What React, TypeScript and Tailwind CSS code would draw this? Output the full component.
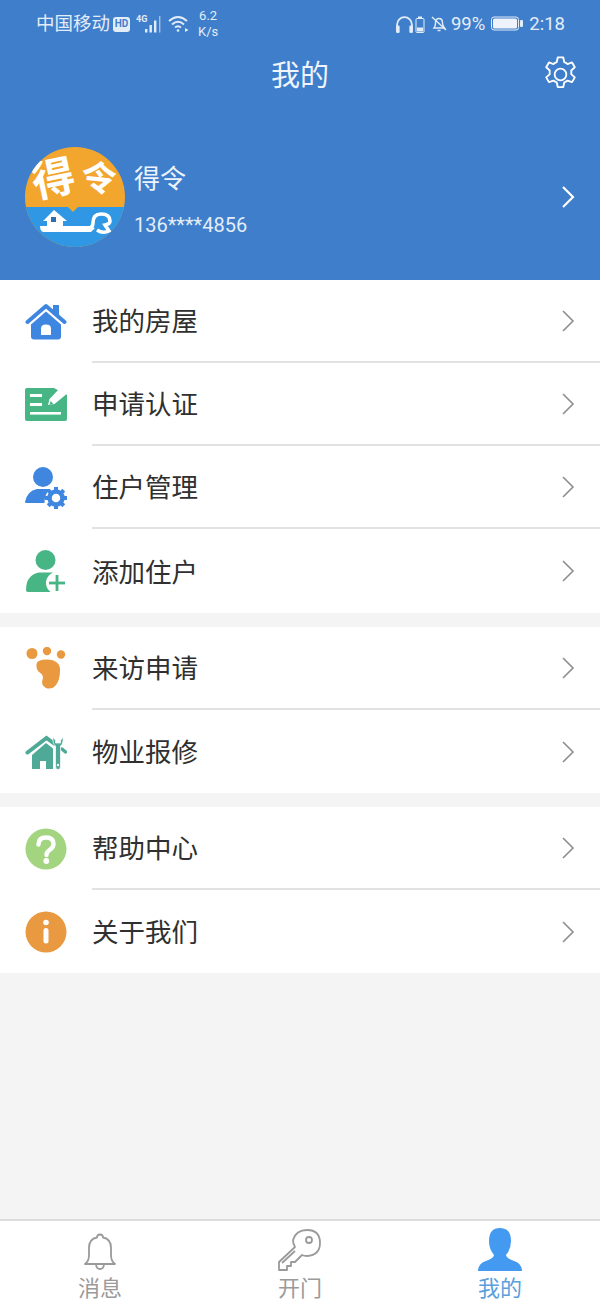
import type { ReactNode } from "react";

const FONT = "font-['Roboto','Noto_Sans_CJK_SC',sans-serif]";

function HomeIcon() {
  return (
    <svg width="42" height="38" viewBox="0 0 42 38">
      <rect x="28" y="2" width="6" height="10" fill="#3f86e0" />
      <path d="M6 21.5 L21 8.5 L36 21.5 V33.5 Q36 36.5 33 36.5 H9 Q6 36.5 6 33.5 Z" fill="#3f86e0" />
      <path d="M2.5 19 L21 3 L39.5 19" fill="none" stroke="#3f86e0" strokeWidth="4" strokeLinecap="round" strokeLinejoin="round" />
      <path d="M16 32 V25.5 Q16 21.5 21 21.5 Q26 21.5 26 25.5 V32 Z" fill="#fff" />
    </svg>
  );
}

function CertIcon() {
  return (
    <svg width="42" height="34" viewBox="0 0 42 34">
      <path d="M2 0 H29 L42 7 V31 Q42 33 40 33 H2 Q0 33 0 31 V2 Q0 0 2 0 Z" fill="#47b584" />
      <rect x="5" y="6" width="12" height="3" fill="#fff" />
      <rect x="5" y="15" width="12" height="3" fill="#fff" />
      <rect x="5" y="24" width="31" height="2.6" fill="#fff" />
      <path d="M23 17 L24.5 11 L34 1 L38.5 0 L41.5 4 L40.5 7 L29.5 16 Z" fill="#fff" />
      <path d="M24.5 17 L25.6 13 L28.2 15.8 Z" fill="#47b584" />
    </svg>
  );
}

function UserGearIcon() {
  const teeth = [0, 45, 90, 135, 180, 225, 270, 315];
  return (
    <svg width="44" height="44" viewBox="0 0 44 44">
      <circle cx="19" cy="11" r="10" fill="#3f86e0" />
      <path d="M1 36 Q3 25 13 23 H26 Q20.5 28 20.5 37 H2 Q1 37 1 36 Z" fill="#3f86e0" />
      <circle cx="32" cy="32" r="6.5" fill="none" stroke="#3f86e0" strokeWidth="4.5" />
      {teeth.map((a) => (
        <rect key={a} x="30" y="21" width="4" height="4" fill="#3f86e0" transform={`rotate(${a} 32 32)`} />
      ))}
    </svg>
  );
}

function UserAddIcon() {
  return (
    <svg width="44" height="44" viewBox="0 0 44 44">
      <circle cx="21.5" cy="11" r="10" fill="#47b584" />
      <path d="M2 41 Q2 26 15 23.5 H28 Q32 24 34 26 V43 H4 Q2 43 2 41 Z" fill="#47b584" />
      <circle cx="33" cy="34" r="11" fill="#fff" />
      <rect x="31.6" y="26" width="2.8" height="16" fill="#47b584" />
      <rect x="25" y="32.6" width="16" height="2.8" fill="#47b584" />
    </svg>
  );
}

function FootIcon() {
  return (
    <svg width="42" height="44" viewBox="0 0 42 44">
      <circle cx="7" cy="6.5" r="5.5" fill="#e9993f" />
      <circle cx="22" cy="4" r="4.2" fill="#e9993f" />
      <circle cx="36" cy="7.5" r="4.2" fill="#e9993f" />
      <path d="M11.5 17 Q12 12.5 22 12.5 Q35 13 35 23 Q35 33 31 38 Q27 43 21 41 Q15 38 18 31 Q18 27 14 25 Q11 22 11.5 17 Z" fill="#e9993f" />
    </svg>
  );
}

function RepairIcon() {
  return (
    <svg width="42" height="36" viewBox="0 0 42 36">
      <path d="M7 21 L21 9 L28 14.5 V35 H21 V27 H15 V35 H7 Z" fill="#4fa997" />
      <path d="M2.5 18.5 L21.5 4 L29 9.5" fill="none" stroke="#4fa997" strokeWidth="4" strokeLinecap="round" />
      <path d="M37 15 L40.5 18" fill="none" stroke="#4fa997" strokeWidth="3.4" strokeLinecap="round" />
      <path d="M28 3 Q27.5 10 30.5 12 V31 Q30.5 35.5 33 35.5 Q35.5 35.5 35.5 31 V12 Q38.5 10 38 3 L35.5 6.5 V9 H30.5 V6.5 Z" fill="#4fa997" stroke="#fff" strokeWidth="0.7" />
      <circle cx="33" cy="31" r="1.2" fill="#fff" />
    </svg>
  );
}

function HelpIcon() {
  return (
    <svg width="42" height="42" viewBox="0 0 42 42">
      <circle cx="21" cy="21" r="20.5" fill="#a3d480" />
      <path d="M13.5 16.5 Q13.5 9.5 21 9.5 Q28.5 9.5 28.5 16 Q28.5 19.5 24.5 22 Q21.5 24 21.5 27" fill="none" stroke="#fff" strokeWidth="4.4" strokeLinecap="round" />
      <circle cx="21.3" cy="33" r="2.9" fill="#fff" />
    </svg>
  );
}

function InfoIcon() {
  return (
    <svg width="42" height="42" viewBox="0 0 42 42">
      <circle cx="21" cy="21" r="20.5" fill="#e9993f" />
      <circle cx="21" cy="11.5" r="2.8" fill="#fff" />
      <rect x="18.5" y="17" width="5" height="15.5" rx="2.5" fill="#fff" />
    </svg>
  );
}

function Chevron({ color = "#8e8e8e", width = 1.6 }: { color?: string; width?: number }) {
  return (
    <svg width="14" height="24" viewBox="0 0 14 24">
      <path d="M2 2 L12 12 L2 22" fill="none" stroke={color} strokeWidth={width} />
    </svg>
  );
}

function GearIcon() {
  return (
    <svg width="39" height="39" viewBox="0 0 24 24" fill="none" stroke="#fff" strokeWidth="1.15" strokeLinejoin="round">
      <path d="M10.3 1.5 h3.4 l.6 2.9 a7.8 7.8 0 0 1 2 1.15 l2.8-.95 1.7 2.95-2.2 1.95 a7.8 7.8 0 0 1 0 2.3 l2.2 1.95-1.7 2.95-2.8-.95 a7.8 7.8 0 0 1-2 1.15 l-.6 2.9 h-3.4 l-.6-2.9 a7.8 7.8 0 0 1-2-1.15 l-2.8.95-1.7-2.95 2.2-1.95 a7.8 7.8 0 0 1 0-2.3 l-2.2-1.95 1.7-2.95 2.8.95 a7.8 7.8 0 0 1 2-1.15 Z" />
      <circle cx="12" cy="12" r="3.6" />
    </svg>
  );
}

function StatusLeft() {
  return (
    <div className="flex items-center">
      <span className="text-[18.5px] leading-[24px] text-[#e3edf8]">中国移动</span>
      <span className="ml-[3px] flex h-[15px] w-[17px] items-center justify-center rounded-[3px] bg-[#e3edf8] text-[10px] font-bold leading-none text-[#3f7ecb]">HD</span>
      <svg className="ml-[6px]" width="27" height="20" viewBox="0 0 27 20" fill="#e3edf8">
        <rect x="9" y="15" width="2.4" height="3.5" />
        <rect x="13.5" y="11" width="2.4" height="7.5" />
        <rect x="18" y="6.5" width="2.4" height="12" />
        <rect x="23" y="2" width="1.4" height="16.5" opacity="0.6" />
        <text x="0" y="8" fontSize="9" fontWeight="700">4G</text>
      </svg>
      <svg className="ml-[5px]" width="22" height="18" viewBox="0 0 22 18" fill="none" stroke="#e3edf8" strokeWidth="1.9">
        <path d="M1 6 Q10 -2 19 6" />
        <path d="M4 9.5 Q10 4 16 9.5" />
        <path d="M7 12.5 Q10 10 13 12.5" />
        <circle cx="10" cy="15.5" r="1.3" fill="#e3edf8" stroke="none" />
        <path d="M17 13 L20.5 15 L17 17 Z" fill="#e3edf8" stroke="none" />
      </svg>
      <div className="ml-[8px] flex flex-col items-center text-[13px] leading-[16px] text-[#e3edf8]">
        <span>6.2</span>
        <span>K/s</span>
      </div>
    </div>
  );
}

function StatusRight() {
  return (
    <div className="flex items-center text-[#e3edf8]">
      <svg width="19" height="19" viewBox="0 0 18 18" fill="none" stroke="#e3edf8" strokeWidth="1.7">
        <path d="M2 14 V9 A7 7 0 0 1 16 9 V14" />
        <rect x="1" y="10" width="3.4" height="7" rx="1.2" fill="#e3edf8" stroke="none" />
        <rect x="13.6" y="10" width="3.4" height="7" rx="1.2" fill="#e3edf8" stroke="none" />
      </svg>
      <svg className="ml-[1px]" width="10" height="19" viewBox="0 0 10 18" fill="none" stroke="#e3edf8" strokeWidth="1">
        <rect x="1" y="3" width="8" height="14" rx="1" />
        <rect x="3" y="1" width="4" height="2" fill="#e3edf8" stroke="none" />
        <rect x="2" y="12" width="6" height="4" fill="#e3edf8" stroke="none" />
      </svg>
      <svg className="ml-[6px]" width="16" height="18" viewBox="0 0 16 18" fill="none" stroke="#e3edf8" strokeWidth="1.4">
        <path d="M3 13 Q4.5 11 4.5 8 Q4.5 3.5 8 3.5 Q11.5 3.5 11.5 8 Q11.5 11 13.5 13 Z" />
        <path d="M1 2 L15 15" />
        <path d="M6.5 15.5 H9.5" />
      </svg>
      <span className="ml-[4px] text-[18.5px] leading-[24px]">99%</span>
      <svg className="ml-[6px]" width="33" height="16" viewBox="0 0 33 16">
        <rect x="0.5" y="1" width="27" height="13" rx="2.5" fill="none" stroke="#e3edf8" strokeWidth="1" />
        <rect x="2" y="2.5" width="24" height="10" rx="1.5" fill="#eef3fb" />
        <rect x="29" y="4" width="3" height="7" rx="1" fill="#e3edf8" />
      </svg>
      <span className="ml-[5px] text-[18.5px] leading-[24px]">2:18</span>
    </div>
  );
}

function Avatar() {
  return (
    <div className="relative h-[100px] w-[100px] shrink-0 overflow-hidden rounded-full bg-[#f2a62e]">
      <div className="absolute inset-x-0 bottom-0 h-[40px] bg-[#2f97e3]" />
      <span className="absolute left-[7px] top-[11px] -rotate-[12deg] text-[43px] font-bold leading-none text-white">得</span>
      <span className="absolute left-[56px] top-[15px] rotate-[6deg] text-[35px] font-bold leading-none text-white">令</span>
      <svg className="absolute bottom-0 left-0" width="100" height="44" viewBox="0 0 100 44">
        <path d="M43 4 H53 L48 9 Z" fill="#f2a62e" />
        <path d="M18 18 L29 7 L42 18 H38 V25 H22 V18 Z" fill="#fff" />
        <rect x="26" y="14" width="5" height="5" fill="#2f6fb0" />
        <path d="M15 23 H64 L70 25 L66 29 H18 Q15 28 15 23 Z" fill="#fff" />
        <path d="M62 26 Q68 25 68 20 Q68 11 76 11 Q85 11 85 18 Q85 21 80 22 L84 28 Q78 31 72 27" fill="none" stroke="#fff" strokeWidth="3.6" />
      </svg>
    </div>
  );
}

function Row({ icon, label, last, height }: { icon: ReactNode; label: string; last?: boolean; height: string }) {
  return (
    <div className={`flex items-center bg-white ${height}`}>
      <div className="flex w-[92px] shrink-0 justify-center">{icon}</div>
      <div className={`flex h-full flex-1 items-center justify-between pr-[25px] ${last ? "" : "border-b-2 border-[#e2e2e2]"}`}>
        <span className="pt-[3px] text-[26.5px] leading-[34px] text-[#303030]">{label}</span>
        <Chevron />
      </div>
    </div>
  );
}

function Tab({ icon, label, active }: { icon: ReactNode; label: string; active?: boolean }) {
  return (
    <div className="flex w-[200px] flex-col items-center">
      <div className="flex h-[45px] items-end">{icon}</div>
      <span className={`mt-[7px] text-[22px] leading-[22px] ${active ? "text-[#5a9fdc]" : "text-[#9a9a9a]"}`}>{label}</span>
    </div>
  );
}

export default function App() {
  return (
    <div className={`flex h-[1300px] w-[600px] flex-col overflow-hidden bg-[#f4f4f4] ${FONT}`}>
      <header className="h-[280px] shrink-0 bg-[#3f7ecb]">
        <div className="flex h-[46px] items-center justify-between pl-[36px] pr-[35px] pt-[2px]">
          <StatusLeft />
          <StatusRight />
        </div>
        <div className="relative flex h-[58px] items-center justify-center">
          <span className="pt-[1px] text-[29px] leading-[36px] text-[#f0f5fb]">我的</span>
          <div className="absolute right-[20px] top-[9px]">
            <GearIcon />
          </div>
        </div>
        <div className="mt-[43px] flex items-center pl-[25px] pr-[25px]">
          <Avatar />
          <div className="ml-[9px] flex flex-1 flex-col pt-[5px]">
            <span className="text-[26px] leading-[34px] text-[#edf3fa]">得令</span>
            <span className="mt-[16px] text-[20px] leading-[26px] text-[#e3edf8]">136****4856</span>
          </div>
          <Chevron color="#ffffff" width={2.2} />
        </div>
      </header>

      <div className="flex flex-col">
        <Row height="h-[83px]" icon={<HomeIcon />} label="我的房屋" />
        <Row height="h-[83px]" icon={<CertIcon />} label="申请认证" />
        <Row height="h-[83px]" icon={<UserGearIcon />} label="住户管理" />
        <Row height="h-[84px]" icon={<UserAddIcon />} label="添加住户" last />
      </div>
      <div className="mt-[14px] flex flex-col">
        <Row height="h-[83px]" icon={<FootIcon />} label="来访申请" />
        <Row height="h-[83px]" icon={<RepairIcon />} label="物业报修" last />
      </div>
      <div className="mt-[14px] flex flex-col">
        <Row height="h-[83px]" icon={<HelpIcon />} label="帮助中心" />
        <Row height="h-[83px]" icon={<InfoIcon />} label="关于我们" last />
      </div>

      <div className="flex-1" />

      <nav className="flex h-[81px] shrink-0 border-t-2 border-[#dcdcdc] bg-white pt-[5px]">
        <Tab
          label="消息"
          icon={
            <svg width="34" height="38" viewBox="0 0 34 38" fill="none" stroke="#9a9a9a" strokeWidth="1.8">
              <path d="M2 31 Q6 28 6 22 V15 Q6 6 14 4.5 Q14 1.5 17 1.5 Q20 1.5 20 4.5 Q28 6 28 15 V22 Q28 28 32 31 Z" strokeLinejoin="round" />
              <path d="M13 31.5 Q13.5 36 17 36 Q20.5 36 21 31.5" />
            </svg>
          }
        />
        <Tab
          label="开门"
          icon={
            <svg width="44" height="42" viewBox="0 0 44 42" fill="none" stroke="#9a9a9a" strokeWidth="1.8" strokeLinejoin="round">
              <path d="M15 11 Q18 1 29 1 Q42 1 42 14 Q42 26 29 27 Q26 27 24 26 L17 33 H13 V37 H9 V41 H1 V33 L17 18 Q15 15 15 11 Z" />
              <circle cx="31" cy="11" r="3" />
              <path d="M4 34 L17 22" />
            </svg>
          }
        />
        <Tab
          active
          label="我的"
          icon={
            <svg width="44" height="43" viewBox="0 0 44 43" fill="#4499f0">
              <path d="M22 0 Q33 0 33 13 Q33 21 28 27 Q28 30 36 33 Q43 35 44 42 V43 H0 V42 Q1 35 8 33 Q16 30 16 27 Q11 21 11 13 Q11 0 22 0 Z" />
            </svg>
          }
        />
      </nav>
    </div>
  );
}
